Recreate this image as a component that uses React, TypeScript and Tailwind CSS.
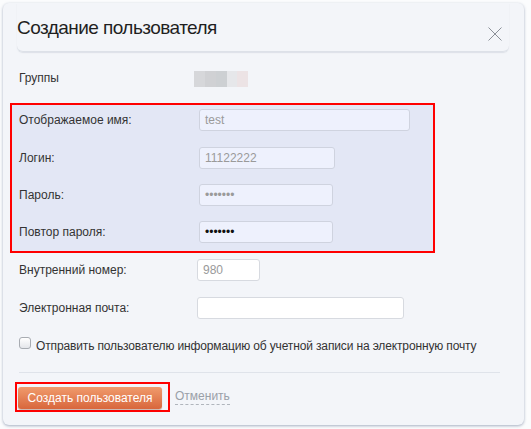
export default function App() {
  const font = "font-['Liberation_Sans',Arial,sans-serif]";
  return (
    <div className={`w-[531px] h-[429px] bg-[#fbfcfd] p-[3px] overflow-hidden ${font}`}>
      <div className="w-[521px] h-[422px] bg-[#f3f5f9] rounded-[6px] shadow-[0_1px_3px_rgba(60,80,120,0.45)] flex flex-col">
        {/* Header */}
        <div className="shrink-0 ml-[14px] mr-[15px] h-[49px] pt-[13px] border-b border-[#dde1e8] rounded-b-[6px] shadow-[0_1px_1px_rgba(200,206,216,0.5)] flex items-start justify-between">
          <h1 className="text-[19px] leading-[24px] text-[#1f1f1f] tracking-[-0.55px]">Создание пользователя</h1>
          <svg className="mt-[11px] mr-[7px]" width="14" height="14" viewBox="0 0 14 14">
            <path d="M0.5 0.5 L13.5 13.5 M13.5 0.5 L0.5 13.5" stroke="#8b9098" strokeWidth="1" fill="none" />
          </svg>
        </div>

        {/* Body */}
        <div className="pl-[16px] flex flex-col shrink-0">
          {/* Groups */}
          <div className="mt-[17px] h-[18px] flex items-center">
            <div className="w-[175px] text-[12px] text-[#333]">Группы</div>
            <div className="flex h-[16px] mt-[1px]">
              <div className="w-[11px] bg-[#d6d7da]" />
              <div className="w-[11px] bg-[#d0d1d4]" />
              <div className="w-[11px] bg-[#cdd0d3]" />
              <div className="w-[10px] bg-[#e6e7ea]" />
              <div className="w-[11px] bg-[#ece3e5]" />
            </div>
          </div>

          {/* Highlighted box */}
          <div className="mt-[16px] -ml-[9px] w-[425px] h-[150px] border-2 border-[#ff0000] bg-[#e3e7f5] pl-[7px] pt-[4px] flex flex-col">
            <Row label="Отображаемое имя:" width="w-[211px]" value="test" />
            <div className="mt-[16px]">
              <Row label="Логин:" width="w-[136px]" value="11122222" />
            </div>
            <div className="mt-[15px]">
              <Row label="Пароль:" width="w-[134px]" value="•••••••" />
            </div>
            <div className="mt-[15px]">
              <Row label="Повтор пароля:" width="w-[134px]" value="•••••••" dark />
            </div>
          </div>

          {/* Internal number */}
          <div className="mt-[6px] h-[22px] flex items-center">
            <div className="w-[178px] text-[12px] text-[#333]">Внутренний номер:</div>
            <div className="w-[63px] h-[22px] bg-white border border-[#d7dae0] rounded-[3px] flex items-center pl-[5px] text-[12px] text-[#9a9a9a]">
              980
            </div>
          </div>

          {/* Email */}
          <div className="mt-[16px] h-[22px] flex items-center">
            <div className="w-[178px] text-[12px] text-[#333]">Электронная почта:</div>
            <div className="w-[207px] h-[22px] bg-white border border-[#d7dae0] rounded-[3px]" />
          </div>

          {/* Checkbox */}
          <div className="mt-[18px] flex items-start">
            <div className="w-[12px] h-[12px] rounded-[3px] border border-[#a8acb2] bg-linear-to-b from-[#ffffff] to-[#e4e6ea]" />
            <div className="ml-[5px] mt-[1px] text-[12px] leading-[16px] text-[#333] whitespace-nowrap tracking-[-0.14px]">
              Отправить пользователю информацию об учетной записи на электронную почту
            </div>
          </div>

          {/* Divider */}
          <div className="mt-[18px] w-[481px] h-[1px] bg-[#dfe3ea]" />

          {/* Buttons */}
          <div className="mt-[9px] flex items-start">
            <div className="-ml-[4px] w-[155px] h-[30px] border-2 border-[#ff0000] pl-[1px] pt-[3px]">
              <div className="w-[144px] h-[22px] rounded-[3px] bg-linear-to-b from-[#f09b6c] to-[#d8663c] shadow-[0_1px_1px_rgba(120,60,30,0.35)] flex items-center justify-center text-[12px] text-white">
                Создать пользователя
              </div>
            </div>
            <div className="ml-[5px] mt-[7px] text-[12px] leading-[15px] text-[#9aa0a8] border-b border-dashed border-[#b0b5bc]">
              Отменить
            </div>
          </div>
        </div>
      </div>
    </div>
  );
}

function Row({ label, width, value, dark }: { label: string; width: string; value: string; dark?: boolean }) {
  return (
    <div className="h-[22px] flex items-center">
      <div className="w-[180px] text-[12px] text-[#333]">{label}</div>
      <div
        className={`${width} h-[22px] bg-[#eef1fd] border border-[#cfd3df] rounded-[3px] flex items-center pl-[5px] text-[12px] ${
          dark ? "text-[#111]" : "text-[#9a9a9a]"
        }`}
      >
        {value}
      </div>
    </div>
  );
}
